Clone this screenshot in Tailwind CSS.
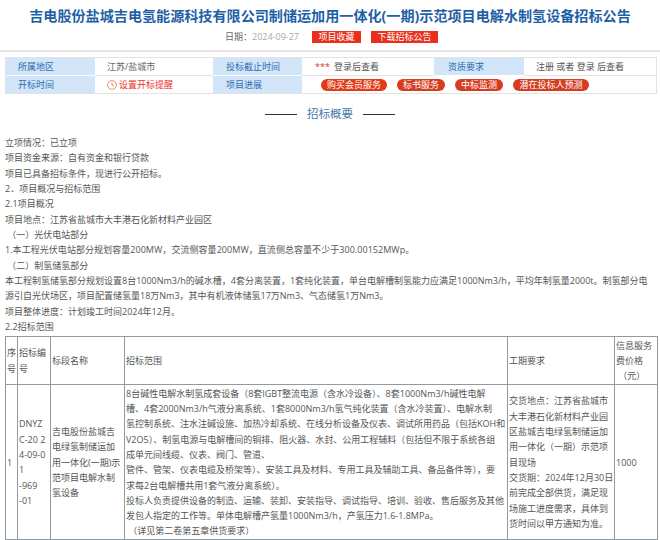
<!doctype html>
<html lang="zh">
<head>
<meta charset="utf-8">
<script src="https://cdn.jsdelivr.net/npm/@tailwindcss/browser@4"></script>
</head>
<body class="bg-white w-[660px] h-[540px] overflow-hidden font-['Open_Sans','Noto_Sans_CJK_SC','Liberation_Sans',sans-serif] text-[#444]">

<div class="h-[52px] border-b-2 border-[#e6e6e6] flex flex-col items-center">
  <h1 class="mt-[6px] h-[20px] leading-[20px] text-[14.1px] font-bold text-[#1f5fa6] whitespace-nowrap">吉电股份盐城吉电氢能源科技有限公司制储运加用一体化(一期)示范项目电解水制氢设备招标公告</h1>
  <div class="mt-[5px] ml-[3px] flex items-center text-[9px] h-[12px]">
    <span class="text-[#666]">日期：</span>
    <span class="text-[#aaa] w-[60px]">2024-09-27</span>
    <span class="bg-[#e8301c] text-white w-[49px] h-[12px] leading-[12px] text-center">项目收藏</span>
    <span class="ml-[10px] bg-[#e8301c] text-white w-[67px] h-[12px] leading-[12px] text-center">下载招标公告</span>
  </div>
</div>

<div class="mx-[5px] mt-[5px] w-[652px] h-[37px] border border-[#e3e3e3] text-[9px] grid grid-cols-[89px_118px_89px_132px_90px_1fr] grid-rows-[18px_17px] leading-[17px]">
  <div class="bg-[#d2e5f9] text-[#2d6cb0] pl-[12px] border-b border-white">所属地区</div>
  <div class="pl-[12px] text-[#666] border-b border-[#e3e3e3]">江苏/盐城市</div>
  <div class="bg-[#d2e5f9] text-[#2d6cb0] pl-[13px] border-b border-white">投标截止时间</div>
  <div class="pl-[13px] text-[#555] border-b border-[#e3e3e3]"><span class="text-[#e8301c] mr-[4px]">***</span>登录后查看</div>
  <div class="bg-[#d2e5f9] text-[#2d6cb0] pl-[14px] border-b border-white">资质要求</div>
  <div class="pl-[12px] text-[#555] border-b border-[#e3e3e3]">注册 或者 登录 后查看</div>

  <div class="bg-[#d2e5f9] text-[#2d6cb0] pl-[12px]">开标时间</div>
  <div class="pl-[12px] text-[#e8301c] flex items-center gap-[2px]">
    <svg width="10" height="10" viewBox="0 0 10 10" fill="none" stroke="#e8705c" stroke-width="0.8"><circle cx="5" cy="5" r="4.4"/><path d="M5 2.4V5.2L7 6.2"/></svg>
    <span>设置开标提醒</span>
  </div>
  <div class="bg-[#d2e5f9] text-[#2d6cb0] pl-[13px]">项目进展</div>
  <div class="col-span-3 flex items-center gap-[10px] pl-[19px] text-white">
    <span class="bg-[#e33a18] rounded-full h-[12px] leading-[12px] w-[66px] text-center">购买会员服务</span>
    <span class="bg-[#d63c20] rounded-full h-[12px] leading-[12px] w-[48px] text-center">标书服务</span>
    <span class="bg-[#d63c20] rounded-full h-[12px] leading-[12px] w-[48px] text-center">中标监测</span>
    <span class="bg-[#d63c20] rounded-full h-[12px] leading-[12px] w-[76px] text-center">潜在投标人预测</span>
  </div>
</div>

<div class="mt-[8px] h-[24px] flex items-center justify-center gap-[10px]">
  <span class="w-[32px] h-px bg-[#333]"></span>
  <span class="text-[11.5px] text-[#4a78ad]">招标概要</span>
  <span class="w-[32px] h-px bg-[#333]"></span>
</div>

<div class="mt-[9px] px-[5px] text-[9px] leading-[15.33px] text-[#555]">
  <p>立项情况：已立项</p>
  <p>项目资金来源：自有资金和银行贷款</p>
  <p>项目已具备招标条件，现进行公开招标。</p>
  <p>2．项目概况与招标范围</p>
  <p>2.1项目概况</p>
  <p>项目地点：江苏省盐城市大丰港石化新材料产业园区</p>
  <p>&nbsp;（一）光伏电站部分</p>
  <p class="tracking-[0.05px]">1.本工程光伏电站部分规划容量200MW，交流侧容量200MW，直流侧总容量不少于300.00152MWp。</p>
  <p>&nbsp;（二）制氢储氢部分</p>
  <p class="whitespace-nowrap">本工程制氢储氢部分规划设置8台1000Nm3/h的碱水槽，4套分离装置，1套纯化装置，单台电解槽制氢能力应满足1000Nm3/h，平均年制氢量2000t。制氢部分电</p>
  <p>源引自光伏场区，项目配置储氢量18万Nm3，其中有机液体储氢17万Nm3、气态储氢1万Nm3。</p>
  <p>项目整体进度：计划竣工时间2024年12月。</p>
  <p>2.2招标范围</p>
</div>

<table class="ml-[5px] mt-[2px] w-[652px] table-fixed border-collapse text-[9px] leading-[15.3px] text-[#555] border border-[#8f9aa3]">
  <colgroup>
    <col class="w-[12px]"><col class="w-[33px]"><col class="w-[74px]"><col class="w-[383px]"><col class="w-[107px]"><col class="w-[43px]">
  </colgroup>
  <tr class="h-[48px]">
    <td class="border border-[#8f9aa3] px-[1px] break-all">序号</td>
    <td class="border border-[#8f9aa3] px-[1px] break-all">招标编号</td>
    <td class="border border-[#8f9aa3] px-[1px]">标段名称</td>
    <td class="border border-[#8f9aa3] px-[1px]">招标范围</td>
    <td class="border border-[#8f9aa3] px-[1px]">工期要求</td>
    <td class="border border-[#8f9aa3] px-[1px] break-all">信息服务费价格<br>&nbsp;（元）</td>
  </tr>
  <tr class="h-[155px]">
    <td class="border border-[#8f9aa3] px-[1px]">1</td>
    <td class="border border-[#8f9aa3] px-[1px] whitespace-nowrap">DNYZ<br>C-20 2<br>4-09-0<br>1<br>-969<br>-01</td>
    <td class="border border-[#8f9aa3] px-[1px] break-all">吉电股份盐城吉电绿氢制储运加用一体化(一期)示范项目电解水制氢设备</td>
    <td class="border border-[#8f9aa3] px-[1px] whitespace-nowrap">
      8台碱性电解水制氢成套设备（8套IGBT整流电源（含水冷设备）、8套1000Nm3/h碱性电解<br>
      槽、4套2000Nm3/h气液分离系统、1套8000Nm3/h氢气纯化装置（含水冷装置）、电解水制<br>
      氢控制系统、注水注碱设施、加热冷却系统、在线分析设备及仪表、调试所用药品（包括KOH和<br>
      V2O5）、制氢电源与电解槽间的铜排、阻火器、水封、公用工程辅料（包括但不限于系统各组<br>
      成单元间线缆、仪表、阀门、管道、<br>
      管件、管架、仪表电缆及桥架等）、安装工具及材料、专用工具及辅助工具、备品备件等），要<br>
      求每2台电解槽共用1套气液分离系统）。<br>
      投标人负责提供设备的制造、运输、装卸、安装指导、调试指导、培训、验收、售后服务及其他<br>
      发包人指定的工作等。单体电解槽产氢量1000Nm3/h，产氢压力1.6-1.8MPa。<br>
      &nbsp;（详见第二卷第五章供货要求）
    </td>
    <td class="border border-[#8f9aa3] px-[1px] whitespace-nowrap">交货地点：江苏省盐城市<br>大丰港石化新材料产业园<br>区盐城吉电绿氢制储运加<br>用一体化（一期）示范项<br>目现场<br>交货期：2024年12月30日<br>前完成全部供货，满足现<br>场施工进度需求，具体到<br>货时间以甲方通知为准。</td>
    <td class="border border-[#8f9aa3] px-[1px]">1000</td>
  </tr>
</table>
<div class="h-[4px] bg-[#dfe8f2]"></div>

</body>
</html>
